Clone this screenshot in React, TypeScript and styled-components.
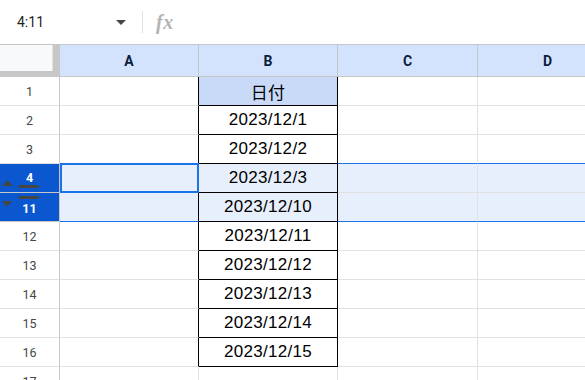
import React from 'react'
import styled, { createGlobalStyle, css } from 'styled-components'

const GlobalStyle = createGlobalStyle`
	html, body {
		margin: 0;
		padding: 0;
		background: #fff;
		overflow: hidden;
	}
	body {
		font-family: Roboto, 'Liberation Sans', Arial, sans-serif;
	}
`

const Page = styled.div`
	display: flex;
	flex-direction: column;
	width: 585px;
	height: 380px;
	overflow: hidden;
`

const FormulaBar = styled.div`
	flex: none;
	display: flex;
	align-items: center;
	height: 45px;
	box-sizing: border-box;
	border-bottom: 1px solid #c4c7c5;
	background: #fff;
`

const NameBox = styled.div`
	display: flex;
	align-items: center;
	justify-content: space-between;
	width: 132px;
	box-sizing: border-box;
	padding: 0 6px 0 17px;
	font-size: 14px;
	color: #1f1f1f;
`

const Divider = styled.div`
	width: 1px;
	height: 22px;
	margin: 0 13px 0 10px;
	background: #e0e0e0;
`

const Fx = styled.span`
	font-family: 'Liberation Serif', 'DejaVu Serif', serif;
	font-style: italic;
	font-weight: 700;
	font-size: 20px;
	letter-spacing: 0.5px;
	color: #b4b4b4;
`

const Sheet = styled.div`
	flex: none;
	display: grid;
	grid-template-columns: 60px 139px 139px 140px 140px;
	grid-template-rows: 32px;
	grid-auto-rows: 29px;
`

const Corner = styled.div`
	box-sizing: border-box;
	background: #f8f9fa;
	border-right: 7px solid #c7c7c7;
	border-bottom: 6px solid #c7c7c7;
	box-shadow: inset -1px 0 0 #e3e3e3;
`

const ColHeader = styled.div`
	box-sizing: border-box;
	display: flex;
	align-items: center;
	justify-content: center;
	background: #d3e3fd;
	border-right: 1px solid #c4c7c5;
	border-bottom: 1px solid #c4c7c5;
	font-size: 14px;
	font-weight: 700;
	color: #0b1d40;
`

const RowHeader = styled.div<{ $selected?: boolean }>`
	position: relative;
	box-sizing: border-box;
	display: flex;
	align-items: center;
	justify-content: center;
	background: ${p => (p.$selected ? '#0b57d0' : '#fff')};
	border-right: 1px solid #c4c7c5;
	border-bottom: 1px solid ${p => (p.$selected ? '#c4c7c5' : '#e1e1e1')};
	font-size: 12.5px;
	color: ${p => (p.$selected ? '#fff' : '#444746')};
	font-weight: ${p => (p.$selected ? 700 : 400)};
`

const RowNum = styled.span<{ $shift?: number }>`
	transform: translateY(${p => p.$shift || 0}px);
`

const HiddenBar = styled.span<{ $top: number }>`
	position: absolute;
	left: 18px;
	top: ${p => p.$top}px;
	width: 21px;
	height: 3px;
	border-radius: 2px;
	background: #444746;
`

const Arrow = styled.svg<{ $top: number }>`
	position: absolute;
	left: 2px;
	top: ${p => p.$top}px;
`

type CellProps = {
	$sel?: boolean
	$boxed?: boolean
	$rightBlack?: boolean
	$blueBottom?: boolean
	$head?: boolean
	$active?: boolean
}

const Cell = styled.div<CellProps>`
	position: relative;
	box-sizing: border-box;
	display: flex;
	align-items: center;
	justify-content: center;
	font-family: 'Liberation Sans', Arial, 'Noto Sans CJK JP', sans-serif;
	font-size: 17px;
	letter-spacing: 0.3px;
	color: #000;
	background: ${p => (p.$head ? '#c9daf8' : p.$sel ? '#e7effd' : '#fff')};
	border-right: 1px solid ${p => (p.$boxed || p.$rightBlack ? '#000' : '#e1e1e1')};
	border-bottom: 1px solid
		${p => (p.$boxed ? '#000' : p.$blueBottom ? '#1a73e8' : '#e1e1e1')};
	${p =>
		p.$active &&
		css`
			&::after {
				content: '';
				position: absolute;
				top: -1px;
				left: 0;
				right: -1px;
				bottom: -1px;
				border: 2px solid #1a73e8;
			}
		`}
`

const rows: { n: number; b: string }[] = [
	{ n: 1, b: '日付' },
	{ n: 2, b: '2023/12/1' },
	{ n: 3, b: '2023/12/2' },
	{ n: 4, b: '2023/12/3' },
	{ n: 11, b: '2023/12/10' },
	{ n: 12, b: '2023/12/11' },
	{ n: 13, b: '2023/12/12' },
	{ n: 14, b: '2023/12/13' },
	{ n: 15, b: '2023/12/14' },
	{ n: 16, b: '2023/12/15' },
	{ n: 17, b: '' },
]

function RowLabel({ n }: { n: number }) {
	if (n === 4) {
		return (
			<RowHeader $selected>
				<Arrow $top={16} width="11" height="6" viewBox="0 0 11 6">
					<path d="M0 6 L5.5 0 L11 6 Z" fill="#444746" />
				</Arrow>
				<RowNum $shift={-1}>4</RowNum>
				<HiddenBar $top={21} />
			</RowHeader>
		)
	}
	if (n === 11) {
		return (
			<RowHeader $selected>
				<Arrow $top={8} width="10" height="6" viewBox="0 0 10 6">
					<path d="M0 0 L10 0 L5 6 Z" fill="#444746" />
				</Arrow>
				<HiddenBar $top={3} />
				<RowNum $shift={1}>11</RowNum>
			</RowHeader>
		)
	}
	return <RowHeader>{n}</RowHeader>
}

export default function App() {
	return (
		<Page>
			<GlobalStyle />
			<FormulaBar>
				<NameBox>
					<span>4:11</span>
					<svg width="10" height="5" viewBox="0 0 10 5">
						<path d="M0 0 L10 0 L5 5 Z" fill="#444746" />
					</svg>
				</NameBox>
				<Divider />
				<Fx>fx</Fx>
			</FormulaBar>
			<Sheet>
				<Corner />
				<ColHeader>A</ColHeader>
				<ColHeader>B</ColHeader>
				<ColHeader>C</ColHeader>
				<ColHeader>D</ColHeader>
				{rows.map(r => {
					const sel = r.n === 4 || r.n === 11
					const blueBottom = r.n === 3 || r.n === 11
					const boxed = r.n <= 16
					return (
						<React.Fragment key={r.n}>
							<RowLabel n={r.n} />
							<Cell $sel={sel} $rightBlack={boxed} $blueBottom={blueBottom} $active={r.n === 4} />
							<Cell $sel={sel} $boxed={boxed} $head={r.n === 1}>
								{r.b}
							</Cell>
							<Cell $sel={sel} $blueBottom={blueBottom} />
							<Cell $sel={sel} $blueBottom={blueBottom} />
						</React.Fragment>
					)
				})}
			</Sheet>
		</Page>
	)
}
